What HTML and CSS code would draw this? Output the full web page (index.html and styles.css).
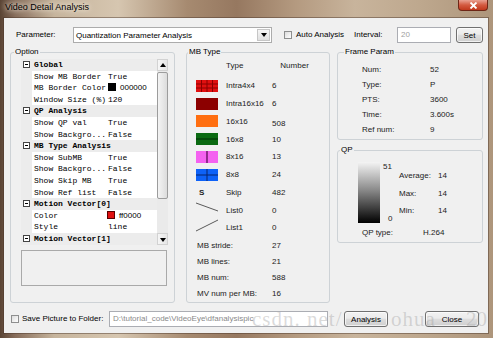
FILE: index.html
```html
<!DOCTYPE html>
<html lang="en">
<head>
<meta charset="UTF-8">
<title>Video Detail Analysis</title>
<link rel="stylesheet" href="styles.css">
</head>
<body>
<div class="window">
  <div class="titlebar">
    <span class="title">Video Detail Analysis</span>
    <span class="close-btn">
      <svg width="9" height="7" viewBox="0 0 9 7"><path d="M1.5 0.5 L7.5 6.5 M7.5 0.5 L1.5 6.5" stroke="#fff" stroke-width="1.8"/></svg>
    </span>
  </div>

  <div class="client">
    <div class="toprow">
      <span class="lbl param-lbl">Parameter:</span>
      <div class="combo">
        <span class="combo-text">Quantization Parameter Analysis</span>
        <span class="combo-arrow"></span>
      </div>
      <span class="check auto-check"></span>
      <span class="lbl auto-lbl">Auto Analysis</span>
      <span class="lbl interval-lbl">Interval:</span>
      <div class="edit interval-edit">20</div>
      <button class="btn set-btn">Set</button>
    </div>

    <div class="main">
      <fieldset class="group option-group">
        <legend>Option</legend>
        <div class="propgrid">
          <div class="props">
            <div class="row cat"><span class="margin"><i class="expander"></i></span><span class="cat-name">Global</span></div>
            <div class="row"><span class="margin"></span><span class="name">Show MB Border</span><span class="val">True</span></div>
            <div class="row"><span class="margin"></span><span class="name">MB Border Color</span><span class="val sans-val"><i class="swatch black"></i>000000</span></div>
            <div class="row"><span class="margin"></span><span class="name">Window Size (%)</span><span class="val">120</span></div>
            <div class="row cat"><span class="margin"><i class="expander"></i></span><span class="cat-name">QP Analysis</span></div>
            <div class="row"><span class="margin"></span><span class="name">Show QP val</span><span class="val">True</span></div>
            <div class="row"><span class="margin"></span><span class="name">Show Backgro...</span><span class="val">False</span></div>
            <div class="row cat"><span class="margin"><i class="expander"></i></span><span class="cat-name">MB Type Analysis</span></div>
            <div class="row"><span class="margin"></span><span class="name">Show SubMB</span><span class="val">True</span></div>
            <div class="row"><span class="margin"></span><span class="name">Show Backgro...</span><span class="val">False</span></div>
            <div class="row"><span class="margin"></span><span class="name">Show Skip MB</span><span class="val">True</span></div>
            <div class="row"><span class="margin"></span><span class="name">Show Ref list</span><span class="val">False</span></div>
            <div class="row cat"><span class="margin"><i class="expander"></i></span><span class="cat-name">Motion Vector[0]</span></div>
            <div class="row"><span class="margin"></span><span class="name">Color</span><span class="val sans-val color-val"><i class="swatch red"></i>ff0000</span></div>
            <div class="row"><span class="margin"></span><span class="name">Style</span><span class="val">line</span></div>
            <div class="row cat"><span class="margin"><i class="expander"></i></span><span class="cat-name">Motion Vector[1]</span></div>
          </div>
          <div class="scrollbar">
            <span class="sb-btn"><i class="arrow-up"></i></span>
            <span class="sb-track"><span class="sb-thumb"></span></span>
            <span class="sb-btn"><i class="arrow-down"></i></span>
          </div>
        </div>
        <div class="desc"></div>
      </fieldset>

      <fieldset class="group mb-group">
        <legend>MB Type</legend>
        <div class="mb-head"><span class="head-type">Type</span><span class="head-num">Number</span></div>
        <div class="mb-list">
          <span class="ico"><svg width="22" height="12"><rect width="22" height="12" fill="#e01010"/><path d="M5.5 0V12M11 0V12M16.5 0V12M0 4H22M0 8H22" stroke="#8a0000" stroke-width="1"/></svg></span>
          <span>Intra4x4</span><span>6</span>
          <span class="ico"><svg width="22" height="12"><rect width="22" height="12" fill="#8c0000"/></svg></span>
          <span>Intra16x16</span><span>6</span>
          <span class="ico"><svg width="22" height="12"><rect width="22" height="12" fill="#ff6e10"/></svg></span>
          <span>16x16</span><span class="low">508</span>
          <span class="ico"><svg width="22" height="12"><rect width="22" height="12" fill="#0b6a12"/><path d="M0 6H22" stroke="#022a05" stroke-width="1"/></svg></span>
          <span>16x8</span><span>10</span>
          <span class="ico"><svg width="22" height="12"><rect width="22" height="12" fill="#f462f0"/><path d="M11 0V12" stroke="#4a0848" stroke-width="1.2"/></svg></span>
          <span>8x16</span><span>13</span>
          <span class="ico"><svg width="22" height="12"><rect width="22" height="12" fill="#0e62f8"/><path d="M11 0V12M0 6H22" stroke="#06246e" stroke-width="1"/></svg></span>
          <span>8x8</span><span>24</span>
          <span class="ico skip-ico">S</span>
          <span>Skip</span><span>482</span>
          <span class="ico line-ico"><svg width="22" height="18"><path d="M0 2 L22 10" stroke="#333" stroke-width="0.8"/></svg></span>
          <span>List0</span><span>0</span>
          <span class="ico line-ico"><svg width="22" height="18"><path d="M0 12 L22 1" stroke="#333" stroke-width="0.8"/></svg></span>
          <span>List1</span><span>0</span>
        </div>
        <div class="mb-stats">
          <span>MB stride:</span><span>27</span>
          <span>MB lines:</span><span>21</span>
          <span>MB num:</span><span>588</span>
          <span>MV num per MB:</span><span>16</span>
        </div>
      </fieldset>

      <div class="right-col">
        <fieldset class="group frame-group">
          <legend>Frame Param</legend>
          <div class="fp-grid">
            <span>Num:</span><span>52</span>
            <span>Type:</span><span>P</span>
            <span>PTS:</span><span>3600</span>
            <span>Time:</span><span>3.600s</span>
            <span>Ref num:</span><span>9</span>
          </div>
        </fieldset>
        <fieldset class="group qp-group">
          <legend>QP</legend>
          <div class="qp-body">
            <div class="qp-bar"></div>
            <div class="qp-scale"><span class="s-top">51</span><span class="s-bottom">0</span></div>
            <div class="qp-stats">
              <span>Average:</span><span>14</span>
              <span>Max:</span><span>14</span>
              <span>Min:</span><span>14</span>
            </div>
          </div>
          <div class="qp-type"><span>QP type:</span><span>H.264</span></div>
        </fieldset>
      </div>
    </div>

    <div class="bottomrow">
      <span class="check folder-check"></span>
      <span class="lbl folder-lbl">Save Picture to Folder:</span>
      <div class="edit folder-edit">D:\tutorial_code\VideoEye\dfanalysispic</div>
      <button class="btn analysis-btn">Analysis</button>
      <button class="btn close-dlg-btn">Close</button>
    </div>
  </div>

  <!-- blog watermark burnt into the screenshot -->
  <span class="watermark wm-1">csdn. net/</span>
  <span class="watermark wm-2">ohua</span>
  <span class="watermark wm-3">20</span>
</div>
</body>
</html>
```

FILE: styles.css
```css
body {
  margin: 0;
  background: #fff;
}
.window {
  position: relative;
  width: 493px;
  height: 338px;
  box-sizing: border-box;
  padding: 0 5px 5px 4px;
  display: flex;
  flex-direction: column;
  font-family: "Liberation Sans", Arial, sans-serif;
  font-size: 8px;
  color: #000;
  background: linear-gradient(90deg, #5a4434 0, #866c5a 3%, #c6b49c 11%, #d6c6b0 24%, #a68a70 38%, #967860 48%, #b49a80 60%, #c8b49c 72%, #bea88e 85%, #ad957b 100%);
  overflow: hidden;
}

/* title bar */
.titlebar {
  height: 18px;
  flex: none;
  display: flex;
  align-items: flex-start;
}
.title {
  margin: 2px 0 0 1px;
  font-size: 9px;
  line-height: 11px;
  text-shadow: 0 0 4px #f2e9dc, 0 0 7px #f2e9dc;
}
.close-btn {
  margin-left: auto;
  width: 30px;
  height: 11px;
  box-sizing: border-box;
  border: 1px solid #6e2616;
  border-top: none;
  border-radius: 0 0 4px 4px;
  background: linear-gradient(#e9a191, #d35a40 50%, #c0381c);
  display: flex;
  align-items: center;
  justify-content: center;
}
.close-btn svg {
  display: block;
}

.client {
  flex: 1;
  background: #f0f0f0;
  box-shadow: 0 0 0 1px rgba(70, 50, 40, 0.45);
  display: flex;
  flex-direction: column;
}

/* common controls */
.lbl {
  line-height: 16px;
  white-space: nowrap;
}
.edit {
  box-sizing: border-box;
  height: 16px;
  border: 1px solid #abadb3;
  background: #fff;
  color: #8a8a8a;
  padding-left: 3px;
  line-height: 14px;
  white-space: nowrap;
  overflow: hidden;
}
.check {
  width: 8px;
  height: 8px;
  box-sizing: border-box;
  border: 1px solid #8e8f8f;
  background: linear-gradient(135deg, #dcdcdc, #fff);
  flex: none;
}
.btn {
  box-sizing: border-box;
  height: 16px;
  padding: 0;
  border: 1px solid #707070;
  border-radius: 3px;
  background: linear-gradient(#f2f2f2 0, #ebebeb 45%, #dddddd 50%, #cfcfcf 100%);
  box-shadow: inset 0 0 0 1px rgba(255, 255, 255, 0.7);
  font-family: "Liberation Sans", Arial, sans-serif;
  font-size: 8px;
  color: #000;
}

/* top row */
.toprow {
  margin-top: 9px;
  height: 16px;
  display: flex;
  align-items: center;
  padding-left: 12px;
}
.param-lbl {
  width: 57px;
}
.combo {
  width: 199px;
  height: 16px;
  box-sizing: border-box;
  border: 1px solid #acacac;
  background: #fff;
  display: flex;
  align-items: center;
}
.combo-text {
  flex: 1;
  padding-left: 2px;
}
.combo-arrow {
  width: 13px;
  height: 12px;
  margin-right: 1px;
  box-sizing: border-box;
  border: 1px solid #c6c6c6;
  background: linear-gradient(#f6f6f6, #e0e0e0);
  position: relative;
}
.combo-arrow::after {
  content: "";
  position: absolute;
  left: 3px;
  top: 3px;
  border-left: 3px solid transparent;
  border-right: 3px solid transparent;
  border-top: 4px solid #000;
}
.auto-check {
  margin-left: 12px;
}
.auto-lbl {
  margin-left: 4px;
  width: 58px;
}
.interval-lbl {
  width: 43px;
}
.interval-edit {
  width: 54px;
  color: #a0a0a0;
}
.set-btn {
  margin-left: 5px;
  width: 27px;
}

/* main area */
.main {
  margin-top: 4px;
  padding-left: 6px;
  display: flex;
  align-items: flex-start;
}
.group {
  margin: 0;
  padding: 0;
  min-inline-size: 0;
  box-sizing: border-box;
  border: 1px solid #cdd2d6;
  border-radius: 3px;
}
.group legend {
  padding: 0 1px;
  margin-left: 3px;
  font-size: 8px;
  line-height: 10px;
}
.option-group {
  width: 165px;
  height: 256px;
}
.mb-group {
  width: 144px;
  height: 256px;
  margin-left: 11px;
}
.mb-group legend {
  margin-left: 1px;
}
.right-col {
  margin-left: 7px;
  width: 146px;
  display: flex;
  flex-direction: column;
}

/* property grid */
.propgrid {
  margin: 2px 0 0 10px;
  width: 147px;
  height: 186px;
  display: flex;
}
.props {
  width: 136px;
  background: #fff;
  font-family: "Liberation Mono", "Courier New", monospace;
  font-size: 8px;
}
.row {
  height: 11.6px;
  line-height: 11.6px;
  display: grid;
  grid-template-columns: 11px 74px 51px;
  white-space: nowrap;
}
.row .margin {
  background: #ececec;
  position: relative;
}
.name,
.val,
.cat-name {
  padding-left: 2px;
  overflow: hidden;
}
.cat {
  background: #ececec;
}
.cat-name {
  grid-column: 2 / 4;
  font-weight: bold;
}
.expander {
  position: absolute;
  left: 2px;
  top: 2px;
  width: 7px;
  height: 7px;
  box-sizing: border-box;
  border: 1px solid #444;
  background: #fff;
}
.expander::after {
  content: "";
  position: absolute;
  left: 1px;
  top: 2px;
  width: 3px;
  height: 1px;
  background: #000;
}
.swatch {
  display: inline-block;
  width: 8px;
  height: 8px;
  margin-right: 4px;
  vertical-align: -1px;
  box-sizing: border-box;
}
.swatch.black {
  background: #000;
}
.swatch.red {
  background: #e01010;
  border: 1px solid #5a0000;
}
.sans-val {
  font-family: "Liberation Sans", Arial, sans-serif;
}
.color-val {
  padding-left: 1px;
}
.scrollbar {
  width: 11px;
  display: flex;
  flex-direction: column;
  background: #eaeaea;
}
.sb-btn {
  height: 12px;
  box-sizing: border-box;
  border: 1px solid #d2d2d2;
  background: linear-gradient(90deg, #f6f6f6, #e6e6e6);
  position: relative;
}
.arrow-up,
.arrow-down {
  position: absolute;
  left: 2px;
  border-left: 3px solid transparent;
  border-right: 3px solid transparent;
}
.arrow-up {
  top: 3px;
  border-bottom: 4px solid #000;
}
.arrow-down {
  top: 4px;
  border-top: 4px solid #000;
}
.sb-track {
  flex: 1;
  padding-top: 1px;
}
.sb-thumb {
  display: block;
  height: 127px;
  box-sizing: border-box;
  border: 1px solid #9c9c9c;
  border-radius: 2px;
  background: linear-gradient(90deg, #f4f4f4, #dcdcdc);
}
.desc {
  margin: 5px 0 0 10px;
  width: 146px;
  height: 36px;
  box-sizing: border-box;
  border: 1px solid #a9a9a9;
  background: #f0f0f0;
}

/* mb type */
.mb-head {
  margin-top: 3px;
  height: 12px;
  line-height: 12px;
  color: #222;
}
.head-type {
  margin-left: 39px;
}
.head-num {
  margin-left: 37px;
}
.mb-list {
  margin-top: 5px;
  display: grid;
  grid-template-columns: 39px 46px 1fr;
  grid-auto-rows: 17.75px;
  align-items: center;
  color: #222;
}
.ico {
  padding-left: 9px;
  height: 12px;
}
.ico svg {
  display: block;
}
.line-ico {
  height: 18px;
}
.skip-ico {
  height: auto;
  padding-left: 12px;
  font-weight: bold;
  font-size: 8px;
}
.low {
  padding-top: 5px;
}
.mb-stats {
  margin-top: 1px;
  padding-left: 10px;
  display: grid;
  grid-template-columns: 75px 1fr;
  grid-auto-rows: 16px;
  align-items: center;
  color: #222;
}

/* frame param */
.frame-group {
  height: 93px;
}
.frame-group legend {
  margin-left: 6px;
}
.fp-grid {
  margin-top: 5px;
  padding-left: 24px;
  display: grid;
  grid-template-columns: 68px 1fr;
  grid-auto-rows: 15px;
  align-items: center;
  color: #222;
}

/* qp */
.qp-group {
  margin-top: 5px;
  height: 98px;
}
.qp-group legend {
  margin-left: 2px;
}
.qp-body {
  margin-top: 7px;
  padding-left: 20px;
  display: flex;
  color: #222;
}
.qp-bar {
  width: 22px;
  height: 61px;
  background: linear-gradient(#f4f4f4, #8c8c8c 45%, #000);
  flex: none;
}
.qp-scale {
  width: 19px;
  height: 61px;
  display: flex;
  flex-direction: column;
  justify-content: space-between;
  line-height: 8px;
}
.s-top {
  padding: 1px 0 0 3px;
}
.s-bottom {
  padding-left: 8px;
}
.qp-stats {
  margin-top: 5px;
  display: grid;
  grid-template-columns: 39px 1fr;
  grid-auto-rows: 17.5px;
  align-items: center;
}
.qp-type {
  margin-top: 4px;
  padding-left: 24px;
  height: 12px;
  line-height: 12px;
  display: grid;
  grid-template-columns: 61px 1fr;
  color: #222;
}

/* bottom row */
.bottomrow {
  margin-top: 8px;
  height: 16px;
  display: flex;
  align-items: center;
}
.folder-check {
  margin-left: 7px;
}
.folder-lbl {
  margin-left: 3px;
  width: 87px;
}
.folder-edit {
  width: 219px;
}
.analysis-btn {
  margin-left: 16px;
  width: 44px;
}
.close-dlg-btn {
  margin-left: 37px;
  width: 54px;
}

.watermark {
  position: absolute;
  top: 307px;
  font-family: "Liberation Serif", "Times New Roman", serif;
  font-size: 21px;
  line-height: 24px;
  letter-spacing: 1px;
  color: rgba(150, 150, 150, 0.35);
  white-space: nowrap;
  pointer-events: none;
}
.wm-1 {
  left: 252px;
}
.wm-2 {
  left: 391px;
}
.wm-3 {
  left: 466px;
  letter-spacing: 0;
}
```
